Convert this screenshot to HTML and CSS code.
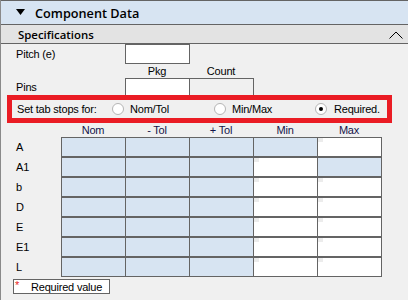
FILE: index.html
```html
<!DOCTYPE html>
<html>
<head>
<meta charset="utf-8">
<link rel="stylesheet" href="styles.css">
</head>
<body>
<div class="panel">
  <div class="hdr">
    <svg class="tri" width="9" height="6" viewBox="0 0 9 6"><polygon points="0,0 9,0 4.5,6" fill="#000"/></svg>
    <span class="hdr-title">Component Data</span>
  </div>
  <div class="spec">
    <span class="spec-title">Specifications</span>
    <svg class="chev" width="15" height="8" viewBox="0 0 15 8"><polyline points="0.5,7.5 7,1 13.5,7.5" fill="none" stroke="#000" stroke-width="1"/></svg>
  </div>
  <div class="body">
    <div class="row pitch">
      <span class="lbl">Pitch (e)</span>
      <div class="box"></div>
    </div>
    <div class="row colhdr small">
      <span class="sp"></span>
      <span class="ch">Pkg</span>
      <span class="ch">Count</span>
    </div>
    <div class="row pins">
      <span class="lbl">Pins</span>
      <div class="pbox"></div>
      <div class="pbox gray"></div>
    </div>
    <div class="tabstops">
      <span class="ts-lbl">Set tab stops for:</span>
      <span class="opt o1"><svg class="radio" width="12" height="12" viewBox="0 0 12 12"><circle cx="6" cy="6" r="5.5" fill="#fff" stroke="#b4b4b4"/></svg>Nom/Tol</span>
      <span class="opt o2"><svg class="radio" width="12" height="12" viewBox="0 0 12 12"><circle cx="6" cy="6" r="5.5" fill="#fff" stroke="#b4b4b4"/></svg>Min/Max</span>
      <span class="opt o3"><svg class="radio" width="12" height="12" viewBox="0 0 12 12"><circle cx="6" cy="6" r="5.5" fill="#fff" stroke="#b4b4b4"/><circle cx="6" cy="6" r="2" fill="#000"/></svg>Required.</span>
    </div>
    <div class="row gridhdr">
      <span class="gh">Nom</span>
      <span class="gh">- Tol</span>
      <span class="gh">+ Tol</span>
      <span class="gh">Min</span>
      <span class="gh">Max</span>
    </div>
    <div class="tbl">
      <div class="rlabels">
        <span>A</span><span>A1</span><span>b</span><span>D</span><span>E</span><span>E1</span><span>L</span>
      </div>
      <div class="grid">
        <div class="c b"></div><div class="c b"></div><div class="c b"></div><div class="c b"></div><div class="c w"></div>
        <div class="c b"></div><div class="c b"></div><div class="c b"></div><div class="c w"></div><div class="c b"></div>
        <div class="c b"></div><div class="c b"></div><div class="c b"></div><div class="c w"></div><div class="c w"></div>
        <div class="c b"></div><div class="c b"></div><div class="c b"></div><div class="c w"></div><div class="c w"></div>
        <div class="c b"></div><div class="c b"></div><div class="c b"></div><div class="c w"></div><div class="c w"></div>
        <div class="c b"></div><div class="c b"></div><div class="c b"></div><div class="c w"></div><div class="c w"></div>
        <div class="c b"></div><div class="c b"></div><div class="c b"></div><div class="c w"></div><div class="c w"></div>
      </div>
    </div>
    <div class="legend"><span class="ast">*</span><span class="ltxt">Required value</span></div>
  </div>
</div>
</body>
</html>
```
FILE: styles.css
```css
html, body {
  margin: 0;
  padding: 0;
  background: #f0f0f0;
}
body {
  width: 408px;
  height: 300px;
  overflow: hidden;
  font-family: "Liberation Sans", Arial, sans-serif;
  font-size: 11px;
  letter-spacing: -0.2px;
  color: #000;
}
.panel {
  border-left: 1px solid #8a8a8a;
  height: 300px;
  box-sizing: border-box;
}
.hdr {
  height: 23px;
  border-top: 1px solid #646464;
  border-bottom: 1px solid #646464;
  background: #d7e4f2;
  display: flex;
  align-items: center;
}
.tri {
  margin-left: 15px;
  margin-right: 10px;
  margin-top: -1px;
}
.hdr-title {
  font-family: "Open Sans", sans-serif;
  font-weight: 600;
  font-size: 12.7px;
  letter-spacing: 0;
}
.spec {
  height: 18px;
  border-bottom: 1px solid #646464;
  background: #e3e3e3;
  display: flex;
  align-items: center;
  justify-content: space-between;
}
.spec-title {
  margin-left: 17px;
  font-family: "Open Sans", sans-serif;
  font-weight: 600;
  font-size: 11.4px;
  letter-spacing: 0;
}
.chev {
  margin-right: 4px;
  margin-top: 1px;
}
.row {
  display: flex;
  align-items: center;
}
.lbl {
  width: 124px;
  padding-left: 15px;
  box-sizing: border-box;
}
.pitch {
  height: 20px;
}
.box {
  width: 65px;
  height: 20px;
  box-sizing: border-box;
  border: 1px solid #646464;
  background: #fff;
}
.colhdr {
  height: 14px;
}
.sp {
  width: 124px;
}
.ch {
  width: 64px;
  text-align: center;
}
.pins {
  height: 17px;
}
.pbox {
  width: 65px;
  height: 17px;
  box-sizing: border-box;
  border: 1px solid #646464;
  border-bottom: none;
  background: #fff;
}
.pbox.gray {
  width: 64px;
  border-left: none;
  background: #f0f0f0;
}
.tabstops {
  margin-left: 6px;
  width: 385px;
  height: 28px;
  box-sizing: border-box;
  border: 5px solid #ea1c24;
  display: flex;
  align-items: center;
}
.ts-lbl {
  width: 100px;
  padding-left: 5px;
  box-sizing: border-box;
}
.opt {
  display: flex;
  align-items: center;
}
.radio {
  margin-right: 6px;
}
.o1 { width: 102px; }
.o2 { width: 101px; }
.o3 .radio { margin-right: 7px; }
.gridhdr {
  height: 14px;
  padding-left: 60px;
}
.gh {
  width: 64px;
  text-align: center;
  color: #14144a;
}
.tbl {
  display: flex;
}
.rlabels {
  width: 60px;
  padding-left: 15px;
  padding-top: 1px;
  box-sizing: border-box;
  display: flex;
  flex-direction: column;
  gap: 2px;
}
.rlabels span {
  height: 18px;
  line-height: 18px;
}
.grid {
  display: grid;
  grid-template-columns: repeat(5, 63px);
  grid-auto-rows: 18px;
  column-gap: 1px;
  row-gap: 2px;
  padding: 1px;
  background: #646464;
}
.c.b {
  background: #d7e4f2;
}
.c.w {
  background: linear-gradient(#ececec, #ececec) no-repeat 0 0 / 5px 4px, #fff;
}
.legend {
  margin-top: 2px;
  margin-left: 12px;
  width: 97px;
  height: 15px;
  box-sizing: border-box;
  border: 1px solid #646464;
  background: #fff;
  display: flex;
  align-items: center;
}
.ast {
  color: #e81c24;
  font-size: 11px;
  width: 16px;
  padding-left: 1px;
  align-self: flex-start;
  line-height: 10px;
}
```
